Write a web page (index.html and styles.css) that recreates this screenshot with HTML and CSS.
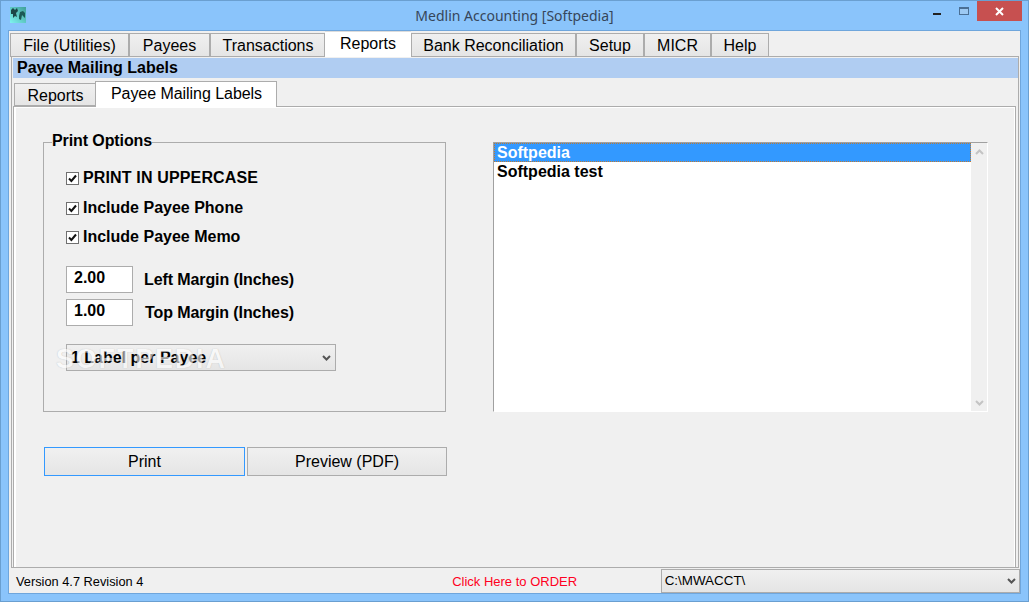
FILE: index.html
```html
<!DOCTYPE html>
<html lang="en">
<head>
<meta charset="utf-8">
<title>Medlin Accounting [Softpedia]</title>
<link rel="stylesheet" href="styles.css">
</head>
<body>
<div class="window">
  <header class="titlebar">
    <svg class="app-icon" viewBox="0 0 16 16" aria-hidden="true">
      <defs><linearGradient id="ig" x1="0" y1="1" x2="1" y2="0"><stop offset="0" stop-color="#7ff4f0"/><stop offset="1" stop-color="#3f9f98"/></linearGradient></defs>
      <rect width="16" height="16" fill="url(#ig)"/>
      <path d="M1 3 3 1 5 3 7 1 8 4 6 6 7 10 5 9 3 11 3 7 1 7Z" fill="#1c4646"/>
      <path d="M9 9 10 5 13 4 15 6 15 11 12 8 11 13 9 12Z" fill="#1c5a56"/>
    </svg>
    <div class="title">Medlin Accounting [Softpedia]</div>
    <div class="controls">
      <span class="ctl-min"></span>
      <span class="ctl-max"></span>
      <span class="ctl-close"><svg viewBox="0 0 9 9" width="9" height="9" aria-hidden="true"><path d="M1 1 8 8M8 1 1 8" stroke="#fff" stroke-width="2" fill="none"/></svg></span>
    </div>
  </header>
  <div class="client">
    <nav class="main-tabs">
      <span class="mtab t1">File (Utilities)</span>
      <span class="mtab t2">Payees</span>
      <span class="mtab t3">Transactions</span>
      <span class="mtab active t4">Reports</span>
      <span class="mtab t5">Bank Reconciliation</span>
      <span class="mtab t6">Setup</span>
      <span class="mtab t7">MICR</span>
      <span class="mtab t8">Help</span>
    </nav>
    <section class="main-panel">
      <div class="heading">Payee Mailing Labels</div>
      <nav class="sub-tabs">
        <span class="stab s1">Reports</span>
        <span class="stab active s2">Payee Mailing Labels</span>
      </nav>
      <div class="sub-panel">
        <div class="left-col">
          <fieldset class="group">
            <legend>Print Options</legend>
            <div class="check c1"><span class="box"><svg viewBox="0 0 11 11" width="11" height="11" aria-hidden="true"><path d="M2 5.500 4.400 8 9 2.500" stroke="#111" stroke-width="2" fill="none"/></svg></span>PRINT IN UPPERCASE</div>
            <div class="check c2"><span class="box"><svg viewBox="0 0 11 11" width="11" height="11" aria-hidden="true"><path d="M2 5.500 4.400 8 9 2.500" stroke="#111" stroke-width="2" fill="none"/></svg></span>Include Payee Phone</div>
            <div class="check c3"><span class="box"><svg viewBox="0 0 11 11" width="11" height="11" aria-hidden="true"><path d="M2 5.500 4.400 8 9 2.500" stroke="#111" stroke-width="2" fill="none"/></svg></span>Include Payee Memo</div>
            <div class="field f1"><span class="input">2.00</span><span class="field-label">Left Margin (Inches)</span></div>
            <div class="field f2"><span class="input">1.00</span><span class="field-label l2">Top Margin (Inches)</span></div>
            <div class="dropdown labels">1 Label per Payee<svg class="chev" viewBox="0 0 9 6" width="9" height="6" aria-hidden="true"><path d="M1 1 4.500 4.500 8 1" stroke="#555" stroke-width="2" fill="none"/></svg></div>
            <div class="watermark">SOFTPEDIA</div>
          </fieldset>
          <div class="actions">
            <button class="btn focused" type="button">Print</button>
            <button class="btn" type="button">Preview (PDF)</button>
          </div>
        </div>
        <div class="listbox">
          <div class="rows">
            <div class="row selected">Softpedia</div>
            <div class="row">Softpedia test</div>
          </div>
          <div class="scrollbar">
            <svg viewBox="0 0 9 6" width="9" height="6" aria-hidden="true"><path d="M1 5 4.500 1.500 8 5" stroke="#c4c4c4" stroke-width="2" fill="none"/></svg>
            <svg viewBox="0 0 9 6" width="9" height="6" aria-hidden="true"><path d="M1 1 4.500 4.500 8 1" stroke="#c4c4c4" stroke-width="2" fill="none"/></svg>
          </div>
        </div>
      </div>
    </section>
    <footer class="status">
      <span class="version">Version 4.7 Revision 4</span>
      <span class="order">Click Here to ORDER</span>
      <div class="dropdown path">C:\MWACCT\<svg class="chev" viewBox="0 0 9 6" width="9" height="6" aria-hidden="true"><path d="M1 1 4.500 4.500 8 1" stroke="#555" stroke-width="2" fill="none"/></svg></div>
    </footer>
  </div>
</div>
</body>
</html>
```
FILE: styles.css
```css
* { box-sizing: border-box; }
html, body { margin: 0; padding: 0; }
body { width: 1029px; height: 602px; overflow: hidden; font-family: "Liberation Sans", Arial, sans-serif; color: #000; }

.window { width: 1029px; height: 602px; background: #8ac4fb; border: 1px solid #6a9fd0; display: flex; flex-direction: column; }
.titlebar { height: 29px; flex: none; display: flex; position: relative; }
.app-icon { width: 16px; height: 16px; margin: 6px 0 0 9px; }
.title { position: absolute; left: 0; right: 0; top: 6px; text-align: center; font: 14px/18px "Noto Sans", sans-serif; color: #36465a; }
.controls { margin-left: auto; margin-right: 6px; display: flex; align-items: flex-start; }
.ctl-min { width: 8px; height: 2px; background: #222; margin: 12px 18px 0 0; }
.ctl-max { width: 10px; height: 8px; border: 1px solid #4a6f95; border-top-width: 2px; background: #9cc9f3; margin: 6px 8px 0 0; }
.ctl-close { width: 45px; height: 20px; background: #c75050; display: flex; align-items: center; justify-content: center; }

.client { flex: 1; margin: 0 7px 7px 7px; background: #f0f0f0; border: 1px solid #6fa6dc; display: flex; flex-direction: column; min-height: 0; }
.main-tabs { height: 25px; flex: none; display: flex; align-items: flex-end; padding-left: 1px; position: relative; z-index: 1; }
.mtab { height: 24px; margin-bottom: -1px; font-size: 16px; line-height: 23px; text-align: center; background: linear-gradient(#f0f0f0, #e5e5e5); border: 1px solid #acacac; }
.mtab.active { height: 26px; background: #fff; border: 0; border-top: 1px solid #dcdcdc; line-height: 23px; }
.t1 { width: 119px; } .t2 { width: 81px; } .t3 { width: 115px; padding-left: 1px; } .t4 { width: 86px; }
.t5 { width: 165px; } .t6 { width: 68px; } .t7 { width: 67px; } .t8 { width: 58px; }

.main-panel { flex: none; height: 512px; margin-left: 2px; margin-right: 1px; border: 1px solid #acacac; background: #f0f0f0; display: flex; flex-direction: column; padding: 1px 0 0 1px; }
.heading { height: 20px; flex: none; background: #b0cdf2; padding-left: 4px; font-size: 16px; font-weight: 700; line-height: 19px; }
.sub-tabs { height: 28px; flex: none; display: flex; align-items: flex-end; padding-left: 1px; position: relative; z-index: 1; }
.stab { height: 23px; font-size: 16px; text-align: center; line-height: 24px; background: linear-gradient(#f0f0f0, #e5e5e5); border: 1px solid #acacac; }
.stab.active { height: 26px; margin-bottom: -1px; background: #fff; line-height: 23px; border-bottom: 0; }
.s1 { width: 82px; padding-left: 1px; } .s2 { width: 182px; margin-left: -1px; padding-left: 1px; letter-spacing: -.05px; }

.sub-panel { flex: 1; margin-right: 2px; border: 1px solid #acacac; border-bottom: 0; box-shadow: inset 2px 1px 0 #fff, inset -1px 0 0 #fff; padding: 25px 28px 0 29px; display: flex; gap: 46px; }
.left-col { width: 404px; flex: none; }

.group { position: relative; margin: 0; width: 403px; height: 280px; padding: 0 0 0 22px; border: 1px solid #acacac; }
.group legend { padding: 0 0 2px; margin-left: -14px; font-size: 16px; font-weight: 700; line-height: 18px; letter-spacing: -.1px; }
.check { display: flex; align-items: center; font-size: 16px; font-weight: 700; height: 20px; }
.c1 { margin-top: 16px; letter-spacing: .15px; } .c2 { margin-top: 10px; } .c3 { margin-top: 9px; }
.box { width: 13px; height: 13px; border: 1px solid #707070; background: #fff; margin-right: 4px; display: flex; flex: none; }
.field { display: flex; align-items: center; height: 27px; font-size: 16px; font-weight: 700; }
.f1 { margin-top: 19px; } .f2 { margin-top: 6px; }
.input { width: 67px; height: 27px; border: 1px solid #acacac; background: #fff; padding-left: 7px; line-height: 22px; }
.field-label { margin-left: 11px; letter-spacing: -.1px; }
.field-label.l2 { margin-left: 12px; }
.dropdown { display: flex; align-items: center; background: linear-gradient(#f0f0f0, #e5e5e5); border: 1px solid #acacac; }
.chev { margin-left: auto; }
.labels { width: 270px; height: 27px; margin-top: 18px; padding: 0 4px; font-size: 16px; font-weight: 700; }
.watermark { position: absolute; left: 12px; top: 192px; font-size: 27px; font-weight: 700; letter-spacing: 1.8px; color: #fff; opacity: .6; text-shadow: 0 0 1px #999; pointer-events: none; }

.actions { display: flex; gap: 2px; margin-top: 35px; margin-left: 1px; }
.btn { width: 200px; height: 29px; padding: 0; font: 16px "Liberation Sans", Arial, sans-serif; color: #000; background: linear-gradient(#f0f0f0, #e5e5e5); border: 1px solid #acacac; }
.btn.focused { width: 201px; border-color: #3399ff; }

.listbox { width: 495px; height: 270px; margin-top: 10px; flex: none; display: flex; background: #fff; border-top: 1px solid #a0a0a0; border-left: 1px solid #a0a0a0; border-right: 1px solid #fff; border-bottom: 1px solid #fff; }
.rows { flex: 1; font-size: 16px; font-weight: 700; line-height: 19px; }
.row { height: 19px; padding-left: 3px; }
.row.selected { background: #3399ff; color: #fff; outline: 1px dotted #c07a30; outline-offset: -1px; }
.scrollbar { width: 16px; flex: none; background: #f0f0f0; display: flex; flex-direction: column; justify-content: space-between; align-items: center; padding: 6px 0 5px; }

.status { flex: 1; display: flex; align-items: center; padding-left: 7px; }
.version { width: 437px; font-size: 12.8px; padding-top: 2px; }
.order { width: 209px; color: #ff0022; font-size: 13px; padding-top: 2px; }
.path { width: 360px; height: 24px; padding: 0 3px; font-size: 13.4px; }
```
